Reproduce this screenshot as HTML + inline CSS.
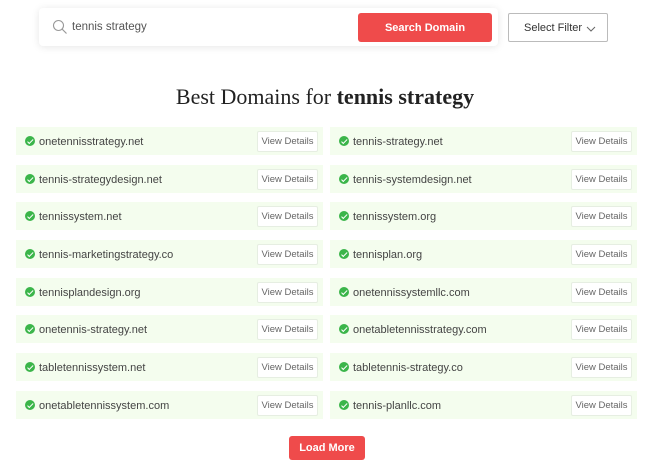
<!DOCTYPE html>
<html><head><style>
*{box-sizing:border-box;margin:0;padding:0}
body{width:650px;height:470px;background:#fff;font-family:"Liberation Sans",sans-serif;position:relative;overflow:hidden}
.sb{position:absolute;left:39px;top:8px;width:459px;height:38px;background:#fff;border-radius:4px;box-shadow:0 1px 8px rgba(0,0,0,.1)}
.q{position:absolute;left:72px;top:21px;font-size:11.5px;color:#555}
.red{position:absolute;background:#ef4b4b;color:#fff;font-weight:bold;font-size:11px;border-radius:3px;display:flex;align-items:center;justify-content:center}
.flt{position:absolute;left:508px;top:13px;width:100px;height:29px;border:1px solid #bbb;border-radius:2px;font-size:11px;color:#333;display:flex;align-items:center;padding-left:15px}
h1{position:absolute;top:84px;left:0;width:650px;text-align:center;font-family:"Liberation Serif",serif;font-weight:normal;font-size:22px;color:#222}
.row{position:absolute;height:28px;width:307px;background:#f4fdee;font-size:11px;color:#444}
.row .c{position:absolute;left:9px;top:9px;width:10px;height:10px;border-radius:50%;background:#3bb54a}
.row .c:after{content:"";position:absolute;left:3.5px;top:1.5px;width:2px;height:4.5px;border:solid #fff;border-width:0 1.2px 1.2px 0;transform:rotate(45deg)}
.row .t{position:absolute;left:23px;top:9px}
.row .b{position:absolute;right:5px;top:4px;width:61px;height:21px;background:#fff;border:1px solid #e6eee2;border-radius:2px;font-size:9.5px;color:#666;text-align:center;line-height:19px}
</style></head><body>
<div class="sb"></div>
<svg style="position:absolute;left:52px;top:19px" width="16" height="16" viewBox="0 0 16 16"><circle cx="6.5" cy="6.5" r="5" fill="none" stroke="#999" stroke-width="1.1"/><line x1="10" y1="10" x2="14.5" y2="14.5" stroke="#999" stroke-width="1.2"/></svg>
<div class="q">tennis strategy</div>
<div class="red" style="left:358px;top:13px;width:134px;height:29px">Search Domain</div>
<div class="flt">Select Filter<svg style="position:absolute;right:11px;top:12px" width="10" height="6"><path d="M1 1 L5 5 L9 1" fill="none" stroke="#666" stroke-width="1"/></svg></div>
<h1>Best Domains for <b>tennis strategy</b></h1>
<div class="row" style="left:16px;top:127px"><i class="c"></i><span class="t">onetennisstrategy.net</span><span class="b">View Details</span></div>
<div class="row" style="left:330px;top:127px"><i class="c"></i><span class="t">tennis-strategy.net</span><span class="b">View Details</span></div>
<div class="row" style="left:16px;top:165px"><i class="c"></i><span class="t">tennis-strategydesign.net</span><span class="b">View Details</span></div>
<div class="row" style="left:330px;top:165px"><i class="c"></i><span class="t">tennis-systemdesign.net</span><span class="b">View Details</span></div>
<div class="row" style="left:16px;top:202px"><i class="c"></i><span class="t">tennissystem.net</span><span class="b">View Details</span></div>
<div class="row" style="left:330px;top:202px"><i class="c"></i><span class="t">tennissystem.org</span><span class="b">View Details</span></div>
<div class="row" style="left:16px;top:240px"><i class="c"></i><span class="t">tennis-marketingstrategy.co</span><span class="b">View Details</span></div>
<div class="row" style="left:330px;top:240px"><i class="c"></i><span class="t">tennisplan.org</span><span class="b">View Details</span></div>
<div class="row" style="left:16px;top:278px"><i class="c"></i><span class="t">tennisplandesign.org</span><span class="b">View Details</span></div>
<div class="row" style="left:330px;top:278px"><i class="c"></i><span class="t">onetennissystemllc.com</span><span class="b">View Details</span></div>
<div class="row" style="left:16px;top:315px"><i class="c"></i><span class="t">onetennis-strategy.net</span><span class="b">View Details</span></div>
<div class="row" style="left:330px;top:315px"><i class="c"></i><span class="t">onetabletennisstrategy.com</span><span class="b">View Details</span></div>
<div class="row" style="left:16px;top:353px"><i class="c"></i><span class="t">tabletennissystem.net</span><span class="b">View Details</span></div>
<div class="row" style="left:330px;top:353px"><i class="c"></i><span class="t">tabletennis-strategy.co</span><span class="b">View Details</span></div>
<div class="row" style="left:16px;top:391px"><i class="c"></i><span class="t">onetabletennissystem.com</span><span class="b">View Details</span></div>
<div class="row" style="left:330px;top:391px"><i class="c"></i><span class="t">tennis-planllc.com</span><span class="b">View Details</span></div>
<div class="red" style="left:289px;top:436px;width:76px;height:24px">Load More</div>
</body></html>
